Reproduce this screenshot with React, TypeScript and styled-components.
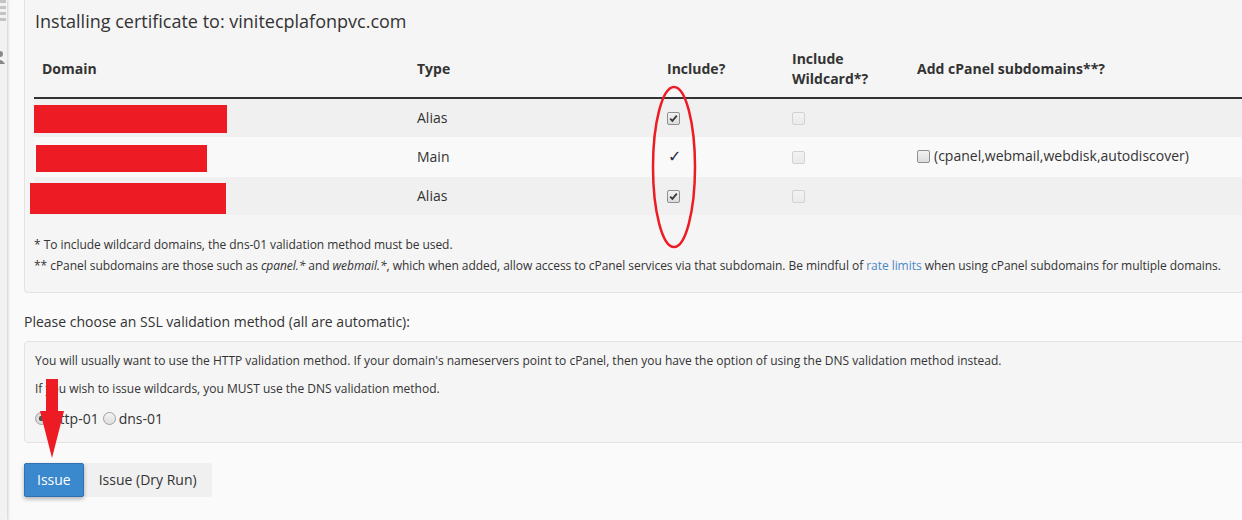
import React from "react";
import styled, { createGlobalStyle } from "styled-components";

const GlobalStyle = createGlobalStyle`
  html, body { margin: 0; padding: 0; }
  body {
    background: #fafafa;
    font-family: "Open Sans", "Liberation Sans", sans-serif;
    color: #333;
    overflow: hidden;
    width: 1242px;
    height: 520px;
  }
  * { box-sizing: border-box; }
`;

const Page = styled.div`
  display: flex;
  height: 520px;
  position: relative;
`;

const Sidebar = styled.aside`
  flex: 0 0 7px;
  background: #f2f2f2;
  box-shadow: 1px 0 3px rgba(0, 0, 0, 0.18);
  position: relative;
  z-index: 1;
  display: flex;
  flex-direction: column;
  overflow: hidden;
`;

const SideIcon = styled.svg<{ $mt?: number }>`
  display: block;
  margin-left: -4px;
  margin-top: ${(p) => p.$mt ?? 0}px;
`;

const Main = styled.main`
  flex: 1;
  padding-left: 17px;
  min-width: 0;
`;

const Well = styled.section`
  background: #f5f5f5;
  border: 1px solid #e3e3e3;
  border-top: none;
  border-radius: 0 0 0 4px;
  margin-right: -20px;
  padding: 8px 0 16px 9px;
`;

const Title = styled.h3`
  margin: 0 0 6px 1px;
  font-size: 18px;
  font-weight: 400;
  line-height: 27px;
  color: #333;
`;

const Table = styled.table`
  width: 100%;
  border-collapse: collapse;
  border-spacing: 0;
  margin-bottom: 19px;
`;

const Th = styled.th<{ $w?: number }>`
  width: ${(p) => (p.$w ? `${p.$w}px` : "auto")};
  text-align: left;
  vertical-align: middle;
  font-size: 14px;
  font-weight: 700;
  line-height: 20px;
  padding: 8px;
  height: 56px;
  border-bottom: 2px solid #333;
`;

const Tr = styled.tr<{ $odd: boolean }>`
  background: ${(p) => (p.$odd ? "#f0f0f0" : "#f9f9f9")};
  & + & td { border-top: 1px solid #ddd; }
`;

const Td = styled.td`
  position: relative;
  font-size: 14px;
  line-height: 20px;
  padding: 9px 8px;
  height: 38px;
  vertical-align: middle;
`;

const Redact = styled.span<{ $l: number; $t: number; $w: number; $h: number }>`
  position: absolute;
  left: ${(p) => p.$l}px;
  top: ${(p) => p.$t}px;
  width: ${(p) => p.$w}px;
  height: ${(p) => p.$h}px;
  background: #ed1c24;
`;

const Box = styled.span<{ $disabled?: boolean }>`
  display: inline-block;
  width: 13px;
  height: 13px;
  border: 1px solid ${(p) => (p.$disabled ? "#d2d2d2" : "#8f8f8f")};
  border-radius: 2px;
  background: ${(p) =>
    p.$disabled ? "linear-gradient(#f3f3f3, #eaeaea)" : "linear-gradient(#f2f2f2, #dcdcdc)"};
  vertical-align: -2px;
  position: relative;
`;

const BoxCheck = styled.svg`
  position: absolute;
  left: 0;
  top: 0;
`;

const Tick = styled.span`
  display: inline-block;
  margin-left: 1px;
  font-size: 16px;
  line-height: 20px;
  color: #1e2a3a;
  font-family: "DejaVu Sans", sans-serif;
`;

const SubOpt = styled.span`
  display: inline-flex;
  align-items: center;
  gap: 4px;
`;

const Note = styled.p`
  margin: 0;
  font-size: 12px;
  line-height: 21px;
  letter-spacing: -0.05px;
  color: #333;
`;

const Link = styled.a`
  color: #4a88c5;
  text-decoration: none;
`;

const Label = styled.p`
  margin: 19px 0 9px 0;
  font-size: 14px;
  line-height: 20px;
  color: #333;
`;

const Well2 = styled.section`
  background: #f5f5f5;
  border: 1px solid #e3e3e3;
  border-radius: 4px 0 0 4px;
  margin-right: -20px;
  padding: 10px 10px 13px 10px;
`;

const Para = styled.p<{ $mb: number }>`
  margin: 0 0 ${(p) => p.$mb}px 0;
  font-size: 12px;
  line-height: 17px;
`;

const RadioRow = styled.div`
  display: flex;
  align-items: center;
  font-size: 14px;
  line-height: 20px;
`;

const Radio = styled.span<{ $on?: boolean }>`
  display: inline-block;
  width: 13px;
  height: 13px;
  border-radius: 50%;
  border: 1px solid #a0a0a0;
  background: ${(p) =>
    p.$on
      ? "radial-gradient(circle, #555 0 2.5px, #dcdcdc 3px)"
      : "linear-gradient(#f4f4f4, #dedede)"};
  margin-right: 3px;
`;

const RadioText = styled.span`
  margin-right: 4px;
`;

const Buttons = styled.div`
  display: flex;
  margin-top: 20px;
`;

const Btn = styled.button<{ $primary?: boolean }>`
  font-family: "Open Sans", "Liberation Sans", sans-serif;
  font-size: 14px;
  height: 34px;
  padding: 0 ${(p) => (p.$primary ? "12px" : "14px")};
  border: 1px solid ${(p) => (p.$primary ? "#2f72b3" : "#f0f0f0")};
  border-radius: 2px;
  background: ${(p) => (p.$primary ? "#3a88cd" : "#f0f0f0")};
  color: ${(p) => (p.$primary ? "#fff" : "#333")};
  box-shadow: ${(p) => (p.$primary ? "0 2px 4px rgba(0,0,0,0.3)" : "none")};
  position: relative;
  z-index: ${(p) => (p.$primary ? 1 : 0)};
`;

const Markup = styled.svg`
  position: absolute;
  left: 0;
  top: 0;
  pointer-events: none;
  z-index: 2;
`;

const rows = [
  { type: "Alias", include: "box", sub: false, r: { l: 0, t: 6, w: 193, h: 28 } },
  { type: "Main", include: "tick", sub: true, r: { l: 2, t: 8, w: 171, h: 27 } },
  { type: "Alias", include: "box", sub: false, r: { l: -4, t: 6, w: 196, h: 31 } },
];

const Check = () => (
  <BoxCheck width="11" height="11" viewBox="0 0 11 11">
    <path d="M2.2 5.6 L4.4 7.8 L8.8 2.6" fill="none" stroke="#3a3a3a" strokeWidth="1.8" />
  </BoxCheck>
);

export default function App() {
  return (
    <>
      <GlobalStyle />
      <Page>
        <Sidebar>
          <SideIcon width="11" height="22" viewBox="0 0 11 22">
            <g fill="#c4c4c4">
              <rect x="0" y="0" width="10" height="3" />
              <rect x="0" y="6" width="10" height="3" />
              <rect x="0" y="12" width="10" height="3" />
              <rect x="0" y="18" width="10" height="3" />
            </g>
          </SideIcon>
          <SideIcon $mt={28} width="11" height="40" viewBox="0 0 11 40">
            <circle cx="4" cy="4" r="3" fill="#888" />
            <path d="M-1 14 Q4 6 9 14 Z" fill="#888" />
          </SideIcon>
        </Sidebar>
        <Main>
          <Well>
            <Title>Installing certificate to: vinitecplafonpvc.com</Title>
            <Table>
              <thead>
                <tr>
                  <Th $w={375}>Domain</Th>
                  <Th $w={250}>Type</Th>
                  <Th $w={125}>Include?</Th>
                  <Th $w={125}>Include Wildcard*?</Th>
                  <Th>Add cPanel subdomains**?</Th>
                </tr>
              </thead>
              <tbody>
                {rows.map((r, i) => (
                  <Tr key={i} $odd={i % 2 === 0}>
                    <Td>
                      <Redact $l={r.r.l} $t={r.r.t} $w={r.r.w} $h={r.r.h} />
                    </Td>
                    <Td>{r.type}</Td>
                    <Td>
                      {r.include === "box" ? (
                        <Box>
                          <Check />
                        </Box>
                      ) : (
                        <Tick>✓</Tick>
                      )}
                    </Td>
                    <Td>
                      <Box $disabled />
                    </Td>
                    <Td>
                      {r.sub && (
                        <SubOpt>
                          <Box />
                          (cpanel,webmail,webdisk,autodiscover)
                        </SubOpt>
                      )}
                    </Td>
                  </Tr>
                ))}
              </tbody>
            </Table>
            <Note>* To include wildcard domains, the dns-01 validation method must be used.</Note>
            <Note>
              ** cPanel subdomains are those such as <em>cpanel.*</em> and <em>webmail.*</em>, which
              when added, allow access to cPanel services via that subdomain. Be mindful of{" "}
              <Link href="#">rate limits</Link> when using cPanel subdomains for multiple domains.
            </Note>
          </Well>
          <Label>Please choose an SSL validation method (all are automatic):</Label>
          <Well2>
            <Para $mb={11}>
              You will usually want to use the HTTP validation method. If your domain's nameservers
              point to cPanel, then you have the option of using the DNS validation method instead.
            </Para>
            <Para $mb={12}>If you wish to issue wildcards, you MUST use the DNS validation method.</Para>
            <RadioRow>
              <Radio $on />
              <RadioText>http-01</RadioText>
              <Radio />
              <RadioText>dns-01</RadioText>
            </RadioRow>
          </Well2>
          <Buttons>
            <Btn $primary>Issue</Btn>
            <Btn>Issue (Dry Run)</Btn>
          </Buttons>
        </Main>
        <Markup width="1242" height="520" viewBox="0 0 1242 520">
          <ellipse cx="674" cy="167" rx="21" ry="80" fill="none" stroke="#ed1c24" strokeWidth="2.5" />
          <rect x="46" y="379" width="12" height="34" fill="#ed1c24" />
          <polygon points="40,411 64,411 52,458" fill="#ed1c24" />
        </Markup>
      </Page>
    </>
  );
}
